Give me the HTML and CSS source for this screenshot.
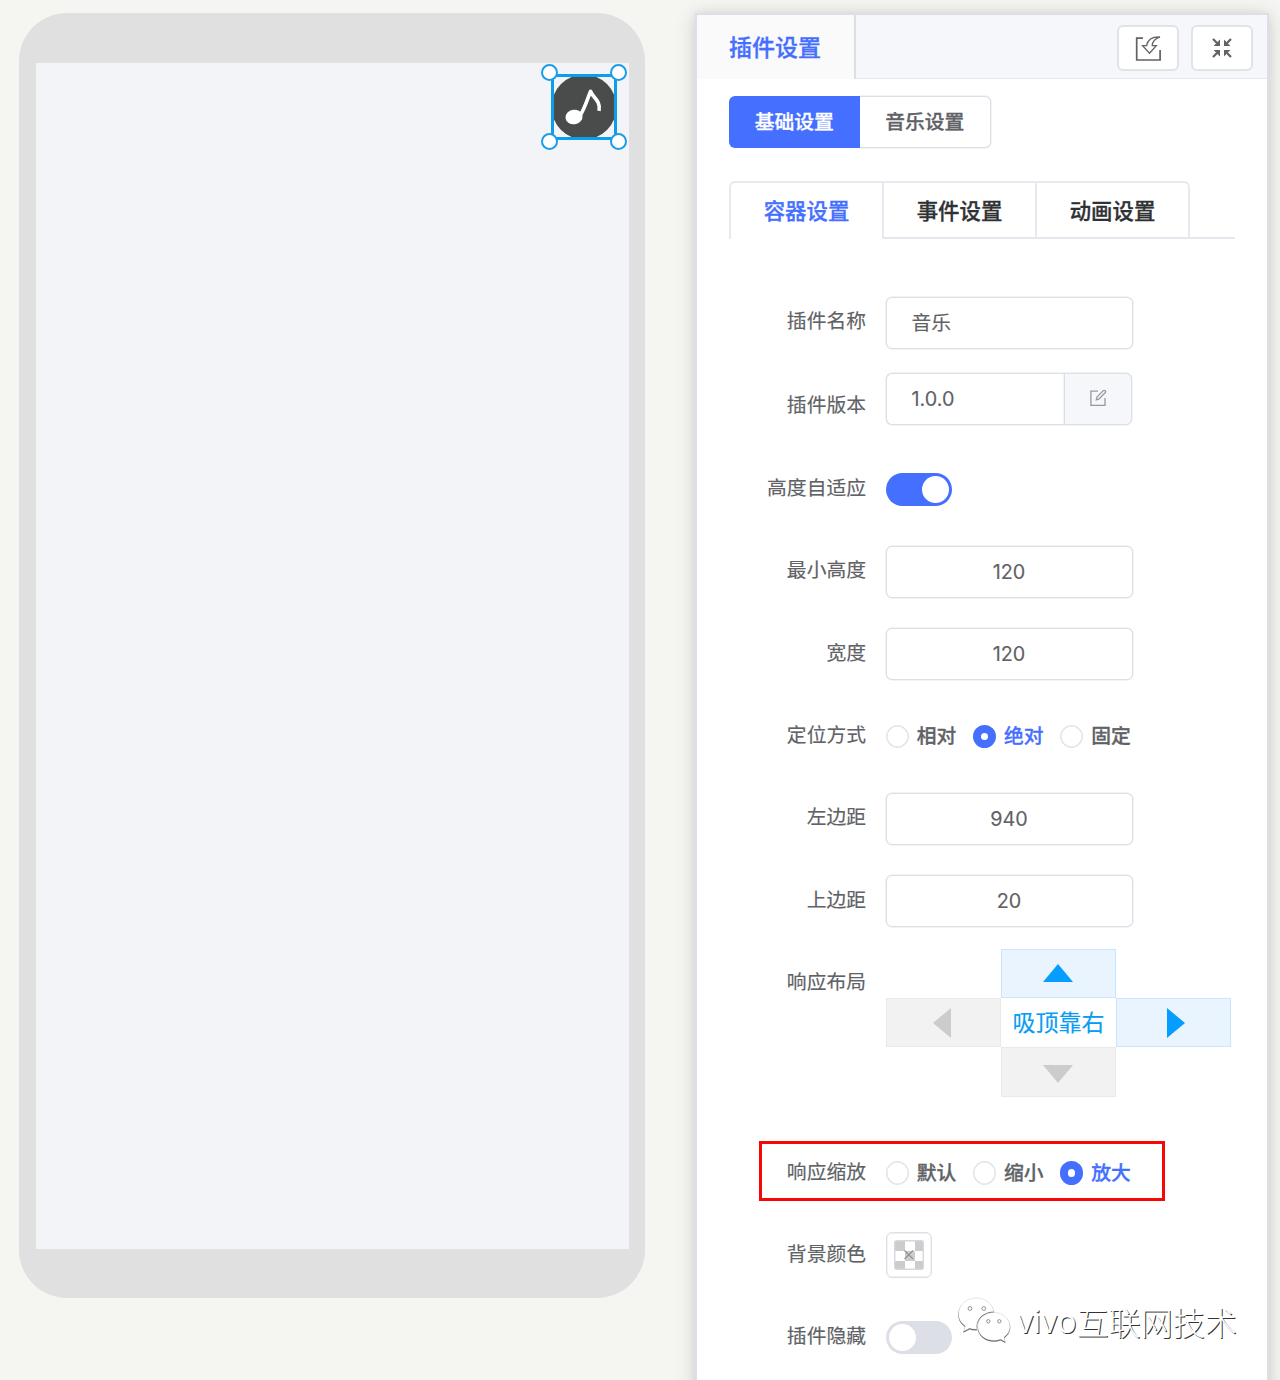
FILE: index.html
```html
<!DOCTYPE html>
<html lang="zh-CN">
<head>
<meta charset="utf-8">
<title>插件设置</title>
<link rel="stylesheet" href="styles.css">
</head>
<body>
<main class="editor">
  <section class="phone">
    <div class="screen">
      <div class="plugin">
        <svg class="music" viewBox="0 0 60 60"><circle cx="30" cy="30" r="32.5" fill="#4a4c4b"/><ellipse cx="20" cy="40" rx="8.6" ry="7.2" fill="#fff" transform="rotate(-8 20 40)"/><path d="M26.4 38C31 31 33 23 36.6 14.3C38 20 47.2 23.5 45 33.8" fill="none" stroke="#fff" stroke-width="3.6" stroke-linejoin="round"/></svg>
        <i class="handle tl"></i><i class="handle tr"></i><i class="handle bl"></i><i class="handle br"></i>
      </div>
    </div>
  </section>

  <section class="panel">
    <header class="panel-head">
      <h1 class="panel-title">插件设置</h1>
      <div class="tools">
        <button class="tool"><svg width="28" height="28" viewBox="0 0 28 28" fill="none" stroke="#606266"><path d="M9 4.2H2.7V26H26.1V16" stroke-width="1.7"/><path d="M26 2.8C18 2.6 13.5 6 12.6 11.7H8.6L15.5 19.2L22.3 11.7H18.2C18.2 7.8 20.4 4.8 26 2.8Z" stroke-width="1.3"/></svg></button>
        <button class="tool"><svg width="20" height="20" viewBox="0 0 20 20" fill="#606266" stroke="#606266"><path d="M1 1L5 5M19 1L15 5M1 19L5 15M19 19L15 15" stroke-width="2.2"/><path stroke="none" d="M8 1.6V8H1.6ZM12 1.6V8H18.4ZM8 18.4V12H1.6ZM12 18.4V12H18.4Z"/></svg></button>
      </div>
    </header>
    <div class="panel-body">
      <div class="segments"><button class="segment on">基础设置</button><button class="segment">音乐设置</button></div>
      <nav class="tabs"><a class="tab on">容器设置</a><a class="tab">事件设置</a><a class="tab">动画设置</a></nav>
      <div class="form">
        <div class="row first"><label class="label">插件名称</label><div class="control"><div class="input">音乐</div></div></div>
        <div class="row version"><label class="label">插件版本</label><div class="control"><div class="input">1.0.0</div><button class="append"><svg width="18" height="18" viewBox="0 0 18 18" fill="none" stroke="#96999f" stroke-width="1.3"><path d="M9 2.2H1.9V16.3H16V9"/><path d="M14 1.9C15.5.5 17.4 2.4 16.1 3.8L9.8 10.1L7.3 10.8L8 8.1Z"/></svg></button></div></div>
        <div class="row"><label class="label">高度自适应</label><div class="control"><span class="switch on"></span></div></div>
        <div class="row"><label class="label">最小高度</label><div class="control"><div class="input number">120</div></div></div>
        <div class="row"><label class="label">宽度</label><div class="control"><div class="input number">120</div></div></div>
        <div class="row"><label class="label">定位方式</label><div class="control"><span class="radio"><i class="dot"></i>相对</span><span class="radio on"><i class="dot"></i>绝对</span><span class="radio"><i class="dot"></i>固定</span></div></div>
        <div class="row"><label class="label">左边距</label><div class="control"><div class="input number">940</div></div></div>
        <div class="row"><label class="label">上边距</label><div class="control"><div class="input number">20</div></div></div>
        <div class="row layout-row"><label class="label">响应布局</label>
          <div class="cross">
            <div class="cell up on"><svg width="30" height="18"><path d="M0 18L15 0L30 18Z"/></svg></div>
            <div class="cell left"><svg width="18" height="30"><path d="M18 0V30L0 15Z"/></svg></div>
            <div class="center">吸顶靠右</div>
            <div class="cell right on"><svg width="18" height="30"><path d="M0 0V30L18 15Z"/></svg></div>
            <div class="cell down"><svg width="30" height="18"><path d="M0 0L15 18L30 0Z"/></svg></div>
          </div>
        </div>
        <div class="row marked"><label class="label">响应缩放</label><div class="control"><span class="radio"><i class="dot"></i>默认</span><span class="radio"><i class="dot"></i>缩小</span><span class="radio on"><i class="dot"></i>放大</span></div></div>
        <div class="row"><label class="label">背景颜色</label><div class="control"><button class="color"><svg width="30" height="30" viewBox="0 0 30 30"><rect x=".7" y=".7" width="28.6" height="28.6" rx="2" fill="#fff"/><path d="M1 1H11V11H1ZM21 1H29V11H21ZM11 11H21V21H11ZM1 21H11V29H1ZM21 21H29V29H21Z" fill="#ccc"/><path d="M10.5 10.5L19 19M19 10.5L10.5 19" stroke="#909399" stroke-width="1.2"/><rect x=".7" y=".7" width="28.6" height="28.6" rx="2" fill="none" stroke="#d3d7df" stroke-width="1.4"/></svg></button></div></div>
        <div class="row"><label class="label">插件隐藏</label><div class="control"><span class="switch"></span></div></div>
      </div>
    </div>
  </section>
</main>
<div class="watermark">
  <svg width="54" height="46" viewBox="0 0 54 46" fill="#fff" stroke="#aaa" stroke-width=".3"><path d="M19.5 1C9 1 1.5 8 1.5 17C1.5 22 4 26 8.3 29L6.5 34.5L12.5 31.3C15 32.1 17 32.4 20 32.2C18 23 26 14.7 37 14.8C35.5 7 28.5 1 19.5 1Z"/><path d="M37 15.5C27.5 15.5 20.8 21.8 20.8 29.5C20.8 37.5 28 43.5 37 43.5C39.3 43.5 41.5 43.1 43.5 42.3L48.3 44.8L47 40.2C50.7 37.5 53 33.8 53 29.5C53 21.8 46 15.5 37 15.5Z"/><g fill="#fff" stroke="#777" stroke-width=".8"><circle cx="13" cy="11.5" r="1.9"/><circle cx="26.8" cy="11.5" r="1.9"/><circle cx="31.3" cy="24.3" r="1.7"/><circle cx="42.3" cy="24.3" r="1.7"/></g></svg>
  <span class="brand">vivo</span><span>互联网技术</span>
</div>
</body>
</html>
```
FILE: styles.css
```css
*, *::before, *::after { box-sizing: border-box; }
body {
  margin: 0;
  height: 1380px;
  overflow: hidden;
  position: relative;
  background: #f5f6f2;
  color: #606266;
  font-family: Inter, "Noto Sans CJK SC", sans-serif;
  font-size: 19.8px;
  -webkit-text-stroke: .15px currentColor;
}
button { font: inherit; color: inherit; padding: 0; margin: 0; }
svg { display: block; flex: none; }

.editor { display: flex; gap: 50px; padding: 13px 11px 0 19px; height: 1380px; }
.phone { width: 626px; height: 1285px; padding: 49.5px 16.5px; border-radius: 48px; background: #e0e0e0; flex: none; }
.screen { height: 100%; position: relative; background: #f2f4f7; }
.plugin { position: absolute; left: 515px; top: 11px; width: 66px; height: 66px; border: 3px solid #0c9eed; }
.music { width: 60px; height: 60px; overflow: hidden; }
.handle { position: absolute; width: 17px; height: 17px; border: 2px solid #1b9de6; border-radius: 50%; background: #fff; }
.tl { left: -13px; top: -13px; }
.tr { right: -13px; top: -13px; }
.bl { left: -13px; bottom: -13px; }
.br { right: -13px; bottom: -13px; }

.panel { width: 574px; height: 1400px; flex: none; border: 2px solid #dcdfe6; background: #fff; box-shadow: 0 3px 20px rgba(0, 0, 0, .15), 0 0 9px rgba(0, 0, 0, .06); }
.panel-head { height: 64px; display: flex; justify-content: space-between; background: linear-gradient(#e4e7ed, #e4e7ed) bottom / 100% 1.5px no-repeat #f5f7fa; }
.panel-title { width: 159px; margin: 0; padding-right: 1px; border-right: 2px solid #dcdfe6; background: #fafafa; color: #456fff; font-size: 23px; font-weight: 500; line-height: 67px; text-align: center; height: 64px; }
.panel-title, .segment, .tab, .radio { -webkit-text-stroke: .3px currentColor; }
.tools { display: flex; gap: 12px; padding: 10px 14.5px; }
.tool { width: 62px; height: 46px; display: flex; align-items: center; justify-content: center; border: 2px solid #e0e3e9; border-radius: 6px; background: #fff; }
.panel-body { padding: 17px 32px 0 32px; }
.segments { display: flex; width: 262px; height: 52px; }
.segment { flex: 1; border: 1px solid #dcdfe6; border-left: 0; border-radius: 0 6px 6px 0; background: #fff; box-shadow: 0 0 0 .5px #e4e7ed; font-weight: 500; line-height: 48px; }
.segment.on { position: relative; border: 0; border-radius: 6px 0 0 6px; background: #456fff; box-shadow: none; color: #fff; }
.tabs { display: flex; height: 58px; margin-top: 33px; background: linear-gradient(#e4e7ed, #e4e7ed) bottom / 100% 2px no-repeat; }
.tab { width: 153px; border-top: 2px solid #e6e9ef; border-right: 2px solid #e6e9ef; color: #303133; font-size: 21.4px; font-weight: 500; line-height: 57px; text-align: center; }
.tab.on { border-left: 2px solid #e6e9ef; border-radius: 6px 0 0 0; background: #fff; color: #456fff; width: 155px; }
.tab:last-child { border-radius: 0 6px 0 0; }

.form { padding-top: 41px; }
.row { height: 82.4px; display: flex; gap: 19.5px; position: relative; }
.row.first { height: 84.4px; }
.label { width: 137px; line-height: 82px; text-align: right; white-space: nowrap; }
.control { height: 85px; display: flex; align-items: center; }
.input { width: 247px; height: 52px; padding: 0 25px; border: 1px solid #dcdfe6; border-radius: 6px; background: #fff; box-shadow: 0 0 0 .5px #e4e7ed; line-height: 50px; }
.number { text-align: center; }
.version .control { height: 69px; }
.version .input { width: 178.5px; border-radius: 6px 0 0 6px; border-right: 0; }
.append { width: 68px; height: 52px; display: flex; align-items: center; justify-content: center; border: 1px solid #dcdfe6; border-radius: 0 6px 6px 0; background: #f5f7fa; box-shadow: 0 0 0 .5px #e4e7ed; }
.append svg { margin-top: -2px; }
.switch { width: 66px; height: 33px; padding: 3px; border-radius: 17px; background: #dcdfe6; display: flex; }
.switch::after { content: ""; width: 27px; height: 27px; border-radius: 50%; background: #fff; }
.switch.on { background: #456fff; justify-content: flex-end; }
.radio { display: flex; align-items: center; gap: 8px; margin-right: 16.3px; font-weight: 500; line-height: 30px; white-space: nowrap; }
.dot { width: 23.3px; height: 23.3px; border: 1px solid #dcdfe6; border-radius: 50%; background: #fff; box-shadow: inset 0 0 0 .5px #dcdfe6; }
.radio.on { color: #456fff; }
.radio.on .dot { border: 8px solid #456fff; box-shadow: none; }
.layout-row { height: 189.5px; }
.cross { display: grid; grid-template-columns: repeat(3, 115.3px); grid-template-rows: repeat(3, 49.4px); margin-top: 7.5px; height: 149px; }
.cell { display: flex; align-items: center; justify-content: center; border: 1px solid #e9e9e9; background: #f2f2f2; fill: #ccc; }
.cell.on { border-color: #c9e5ff; background: #eaf4fe; fill: #059dff; }
.up { grid-area: 1 / 2; }
.left { grid-area: 2 / 1; }
.center { grid-area: 2 / 2; color: #079cf5; font-size: 23px; line-height: 50px; text-align: center; white-space: nowrap; }
.right { grid-area: 2 / 3; }
.down { grid-area: 3 / 2; }
.down svg { margin-top: 4px; }
.left svg { margin-right: 2px; }
.right svg { margin-left: 5px; }
.marked::after { content: ""; position: absolute; left: 30px; top: 10px; width: 406px; height: 60px; border: 3px solid #f90606; }
.color { width: 46px; height: 46px; margin-top: -2px; display: flex; align-items: center; justify-content: center; border: 1px solid #e0e0e3; border-radius: 6px; background: #fff; box-shadow: inset 0 0 0 .5px #e4e4e6; }

.watermark { position: absolute; left: 957px; top: 1297px; display: flex; align-items: center; color: #fff; font-family: "Noto Sans CJK SC", sans-serif; font-size: 32.1px; line-height: 48px; font-weight: 300; text-shadow: 1px 1px .6px #333; white-space: nowrap; -webkit-text-stroke: 0; }
.watermark svg { margin-top: -3px; filter: drop-shadow(0 1px .4px #555); overflow: visible; }
.brand { font-family: "Open Sans", sans-serif; font-weight: 400; margin-left: 6px; }
```
